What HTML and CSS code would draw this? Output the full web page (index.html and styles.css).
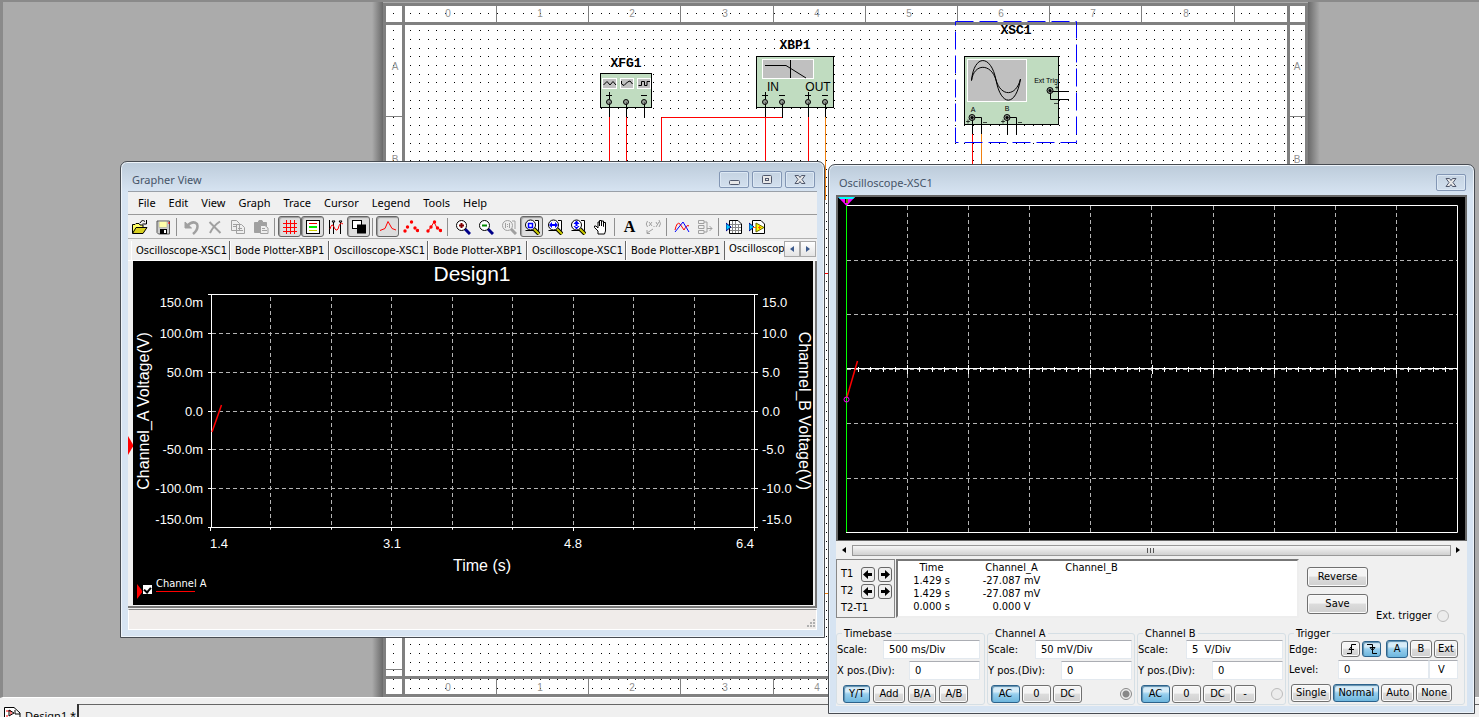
FILE: index.html
```html
<!DOCTYPE html>
<html lang="en">
<head>
<meta charset="utf-8">
<title>Design1</title>
<link rel="stylesheet" href="styles.css">
</head>
<body>
<main class="workspace">
  <svg class="sheet" width="948" height="695" viewBox="372 2 948 695">
    <defs>
      <linearGradient id="shL"><stop offset="0" stop-color="#ababab"/><stop offset="1" stop-color="#6a6a6a"/></linearGradient>
      <linearGradient id="shR"><stop offset="0" stop-color="#6a6a6a"/><stop offset="1" stop-color="#ababab"/></linearGradient>
    </defs>
    <rect x="372" y="2" width="11" height="696" fill="url(#shL)"/>
    <rect x="1308" y="2" width="12" height="696" fill="url(#shR)"/>
    <rect x="383" y="3" width="925" height="694" fill="#808080"/>
    <rect x="386" y="6" width="919" height="688" fill="#fff"/>
    <path id="dots" stroke="#000" shape-rendering="crispEdges"/>
    <g fill="#808080">
      <rect x="402" y="6" width="3" height="688"/><rect x="1287" y="6" width="3" height="688"/>
      <rect x="386" y="22" width="919" height="3"/><rect x="386" y="676" width="919" height="3"/>
    </g>
    <path id="rulers" stroke="#808080"/>
    <g id="rulerText" class="ruler-text"></g>
    <g fill="none" stroke="#f00">
      <path d="M609.500 117V170M626.500 117V170M661.500 170V117.500H782M765.500 117V170M808.500 117V170M972.500 134V170M820 273.500H830"/>
      <path stroke="#f08010" d="M825.500 117V200M981.500 134V170M820 593.500H830"/>
    </g>
    <g class="part-box">
      <rect x="600.500" y="73.500" width="51" height="34"/>
      <rect x="756.500" y="56.500" width="77" height="51"/>
      <rect x="964.500" y="56.500" width="94" height="68"/>
    </g>
    <g class="part-screen">
      <rect x="602.500" y="78.500" width="14" height="10"/><rect x="620.500" y="78.500" width="13" height="10"/><rect x="637.500" y="78.500" width="13" height="10"/>
      <rect x="762.500" y="59.500" width="51" height="19"/>
      <rect x="967.500" y="59.500" width="59" height="42"/>
    </g>
    <g fill="none" stroke="#000">
      <path d="M603.500 85L607 81.500L610 85L613 81.500L616 85M621.500 81V84L624 85.500L627.500 82L630 81L632.500 84M638.500 85.500H641.500V81.500H644.500V85.500H647V81.500H650"/>
      <path d="M765 65.500H786L790 68L806 78M790.500 60V78"/>
      <path d="M971.500 80.500C974 54 991 54 996 80C1001 107 1016 107 1020.500 79M971.500 80.500C974 63 991 63 996 80C1001 97 1016 97 1020.500 79"/>
      <path d="M606 95.500H612M609.500 92V99M641 95.500H647M762 95.500H768M765.500 92V99M779 95.500H785M805 95.500H811M808.500 92V99M822 95.500H828"/>
      <path d="M609.500 102V117M626.500 102V117M644.500 102V118M765.500 102V117M782.500 102V117M808.500 102V117M825.500 102V117"/>
      <path d="M972.500 117V134M972.500 117.500H981.500V134M1007.500 117V135M1007.500 117.500H1016.500V135M1069 91.500H1050.500V99.500H1069"/>
      <path stroke-width=".7" d="M966 121.500H970M968 119.500V123.500M983 122.500H987M1001 121.500H1005M1003 119.500V123.500M1018 122.500H1022M1055 87.500H1059M1057 85.500V89.500M1054 103.500H1058"/>
    </g>
    <g fill="#808080" fill-opacity=".7" stroke="#000">
      <circle cx="609" cy="102" r="2.500"/><circle cx="626" cy="102" r="2.500"/><circle cx="644" cy="102" r="2.500"/>
      <circle cx="765" cy="102" r="2.500"/><circle cx="782" cy="102" r="2.500"/><circle cx="808" cy="102" r="2.500"/><circle cx="825" cy="102" r="2.500"/>
      <circle cx="972" cy="117.500" r="3"/><circle cx="1007" cy="117.500" r="3"/><circle cx="1050" cy="90.500" r="3"/>
    </g>
    <g><circle cx="972" cy="117.500" r="1.500"/><circle cx="1007" cy="117.500" r="1.500"/><circle cx="1050" cy="90.500" r="1.500"/></g>
    <g class="part-name"><text x="626" y="67">XFG1</text><text x="795" y="49">XBP1</text><text x="1016" y="34">XSC1</text></g>
    <g class="part-port"><text x="773" y="91">IN</text><text x="818" y="91">OUT</text></g>
    <g class="part-pin"><text x="973" y="112">A</text><text x="1007" y="111">B</text><text x="1046" y="83">Ext Trig</text></g>
    <rect x="955.500" y="21.500" width="121" height="121" fill="none" stroke="#00f" stroke-dasharray="18 6"/>
  </svg>

  <section class="window grapher">
    <header class="title-bar">
      <h1>Grapher View</h1>
      <button class="win-btn" aria-label="Minimize"><svg width="12" height="12"><rect x="1.500" y="6.500" width="10" height="4" rx="1"/></svg></button>
      <button class="win-btn" aria-label="Maximize"><svg width="12" height="12"><rect x="1.500" y="1.500" width="9" height="8" rx="1"/><rect x="4.500" y="4.500" width="3" height="2"/></svg></button>
      <button class="win-btn" aria-label="Close"><svg width="12" height="12"><path d="M1 1.500H4.500L6 3.500L7.500 1.500H11L8 5.500L11 9.500H7.500L6 7.500L4.500 9.500H1L4 5.500Z"/></svg></button>
    </header>
    <div class="client">
      <nav class="menu"><button>File</button><button>Edit</button><button>View</button><button>Graph</button><button>Trace</button><button>Cursor</button><button>Legend</button><button>Tools</button><button>Help</button></nav>
      <div class="toolbar">
        <button aria-label="Open"><svg viewBox="0 0 16 16"><path d="M.500 14V5.500H3L4 4.500H7L8 6H11V8.500" fill="#ff6" stroke="#000"/><path d="M.500 14.500L4 8.500H15L11 14.500Z" fill="#d8d020" stroke="#000"/><path d="M8 4Q10 0 13 2.500M14.500 1V5H10.500" fill="none" stroke="#000"/></svg></button>
        <button aria-label="Save"><svg viewBox="0 0 16 16"><path d="M2 2H14.500V15H3.500L2 13.500Z" fill="#ccc" stroke="#555"/><rect x="4" y="2.500" width="8" height="6" fill="#ffa" stroke="#999" stroke-width=".5"/><rect x="5" y="10" width="7" height="5" fill="#000"/><rect x="9" y="11" width="2" height="3" fill="#fff"/><path d="M14 3V5" stroke="red"/></svg></button>
        <i class="sep"></i>
        <button aria-label="Undo"><svg viewBox="0 0 16 16" fill="none" stroke="#a0a0a0" stroke-width="2.500"><path d="M3 7Q9 1 13 5Q15 10 9 15"/><path d="M1 3V9H7.500Z" fill="#a0a0a0" stroke-width="1"/></svg></button>
        <button aria-label="Delete"><svg viewBox="0 0 16 16"><path d="M2.500 3L13.500 14M13 2.500Q7 6 3 14" stroke="#a0a0a0" stroke-width="2" fill="none"/></svg></button>
        <button aria-label="Copy"><svg viewBox="0 0 16 16" fill="#eee" stroke="#a0a0a0"><path d="M1.500 1.500H6.500L9.500 4.500V11.500H1.500ZM6.500 5.500H11.500L14.500 8.500V14.500H6.500Z"/><path d="M3 5.500H7M3 7.500H6M8 9.500H12M8 11.500H13"/></svg></button>
        <button aria-label="Paste"><svg viewBox="0 0 16 16" fill="#a0a0a0" stroke="#a0a0a0"><path d="M1.500 3.500H5L6 1.500H9L10 3.500H13.500V13.500H1.500Z"/><path d="M7.500 6.500H12L15 9V14.500H7.500Z" fill="#eee"/><path d="M9 9.500H12M9 11.500H14"/></svg></button>
        <i class="sep"></i>
        <button class="on" aria-label="Grid"><svg viewBox="0 0 16 16"><path d="M4.500 1V15M8.500 1V15M12.500 1V15M1 4.500H15M1 8.500H15M1 12.500H15" stroke="#f00"/></svg></button>
        <button class="on" aria-label="Legend"><svg viewBox="0 0 16 16"><rect x="1.500" y="1.500" width="13" height="13" fill="#fff" stroke="#000"/><path d="M4 4.500H12" stroke="#e00"/><path d="M4 8H12" stroke="#0e0" stroke-width="2"/><path d="M4 11.500H12" stroke="#cc0"/></svg></button>
        <button aria-label="Cursors"><svg viewBox="0 0 16 16" fill="none"><path d="M1.500 1V15M5.500 3V15M12.500 3V15M4 2H7L5.500 4ZM11 2H14L12.500 4Z" stroke="#000"/><path d="M2 10Q4 3 6 8T10 10Q12 2 15 5" stroke="#f00"/></svg></button>
        <button class="on" aria-label="Overlay"><svg viewBox="0 0 16 16"><rect x="6" y="5.500" width="9" height="9"/><rect x="1.500" y="1.500" width="9" height="8" fill="#fff" stroke="#000"/><rect x="6" y="5.500" width="4" height="3.500"/></svg></button>
        <i class="sep"></i>
        <button class="on" aria-label="Lines"><svg viewBox="0 0 16 16"><path d="M0 11.500L5 9.500L8 2.500L12 9.500L16 11" fill="none" stroke="#f00"/></svg></button>
        <button aria-label="Symbols"><svg viewBox="0 0 16 16" fill="#f00"><circle cx="2" cy="12" r="1.700"/><circle cx="4.500" cy="8" r="1.700"/><circle cx="8.500" cy="3" r="1.700"/><circle cx="12" cy="9" r="1.700"/><circle cx="14.500" cy="11.500" r="1.700"/></svg></button>
        <button aria-label="Lines and symbols"><svg viewBox="0 0 16 16" fill="#f00"><path d="M2 12L5 8L8 3L11 9L15 11" fill="none" stroke="#f00"/><circle cx="2" cy="12" r="1.700"/><circle cx="5" cy="8" r="1.700"/><circle cx="8.500" cy="3" r="1.700"/><circle cx="11.500" cy="9" r="1.700"/><circle cx="14.500" cy="11.500" r="1.700"/></svg></button>
        <i class="sep"></i>
        <button aria-label="Zoom in"><svg viewBox="0 0 16 16"><path d="M10 10L15 15" stroke="#008" stroke-width="3"/><circle cx="6.500" cy="6.500" r="5" fill="#fff" stroke="#000"/><path d="M4 6.500H9M6.500 4V9" stroke="#800000" stroke-width="2"/></svg></button>
        <button aria-label="Zoom out"><svg viewBox="0 0 16 16"><path d="M10 10L15 15" stroke="#008" stroke-width="3"/><circle cx="6.500" cy="6.500" r="5" fill="#fff" stroke="#000"/><path d="M4 6.500H9" stroke="#080" stroke-width="2"/></svg></button>
        <button aria-label="Zoom actual"><svg viewBox="0 0 16 16"><path d="M10 10L15 15" stroke="#a0a0a0" stroke-width="3"/><circle cx="6.500" cy="6.500" r="5" fill="#eee" stroke="#a0a0a0"/><path d="M11 2H14V10M4.500 4V9M8.500 4V9M6.500 5V6M6.500 7V8" stroke="#a0a0a0" fill="none"/></svg></button>
        <button class="on" aria-label="Zoom area"><svg viewBox="0 0 16 16"><path d="M11 1.500H14.500V11.500H1.500" fill="#fff" stroke="#000"/><path d="M10 10L15 15" stroke="#000" stroke-width="4"/><path d="M10 10L15 15" stroke="#cc0" stroke-width="2"/><circle cx="6.500" cy="6" r="5" fill="#fff" stroke="#000"/><rect x="4.500" y="4.500" width="4" height="4" fill="none" stroke="#00f" stroke-width="1.500"/></svg></button>
        <button aria-label="Zoom horizontal"><svg viewBox="0 0 16 16"><path d="M11 1.500H14.500V11.500H1.500" fill="#fff" stroke="#000"/><path d="M10 10L15 15" stroke="#000" stroke-width="4"/><path d="M10 10L15 15" stroke="#cc0" stroke-width="2"/><circle cx="6.500" cy="6" r="5" fill="#fff" stroke="#000"/><path d="M2 6L5 3V9ZM11 6L8 3V9ZM5 5H8V7H5Z" fill="#00f"/></svg></button>
        <button aria-label="Zoom vertical"><svg viewBox="0 0 16 16"><path d="M11 1.500H14.500V11.500H1.500" fill="#fff" stroke="#000"/><path d="M10 10L15 15" stroke="#000" stroke-width="4"/><path d="M10 10L15 15" stroke="#cc0" stroke-width="2"/><circle cx="6.500" cy="6" r="5" fill="#fff" stroke="#000"/><path d="M6.500 1.500L9.500 5H3.500ZM6.500 10.500L9.500 7H3.500ZM5.500 4H7.500V8H5.500Z" fill="#00f"/></svg></button>
        <button aria-label="Pan"><svg viewBox="0 0 16 16"><path d="M5 15V12L1.500 8.500V7H3L5 9V3H6.500V7V1.500H8.500V7V2H10.500V7.500V3.500H12.500V12L11.500 15Z" fill="#fff" stroke="#000"/></svg></button>
        <i class="sep"></i>
        <button class="text-tool">A</button>
        <button aria-label="Label point"><svg viewBox="0 0 16 16" fill="none" stroke="#a0a0a0"><path d="M2.500 2Q0 5 2.500 8M4 3L7 7M7 3L4 7M9 7V8M11 3L12 5M14 3L11 8M14 1Q17 5 14 8M8 10L2 14M2 11V14.500H5"/></svg></button>
        <i class="sep"></i>
        <button aria-label="Overlay traces"><svg viewBox="0 0 16 16" fill="none"><path d="M1 11Q3 2 6 5L10 11Q13 5 15 7" stroke="#f00"/><path d="M1 13L9 3L15 13" stroke="#00f"/></svg></button>
        <button aria-label="Merge"><svg viewBox="0 0 16 16" fill="none" stroke="#a0a0a0"><path d="M1.500 1.500H7V4.500H1.500ZM1.500 6.500H7V9.500H1.500ZM1.500 11.500H7V14.500H1.500ZM7 3H10V13H7M10 9.500H15M12.500 7L15 9.500L12.500 12"/></svg></button>
        <i class="sep"></i>
        <button aria-label="Export to Excel"><svg viewBox="0 0 16 16"><path d="M3.500 1.500H12L15.500 5V14.500H3.500Z" fill="#fff" stroke="#000"/><path d="M6.500 2V14M9.500 2V14M12.500 5V14M4 5.500H15M4 8.500H15M4 11.500H15" stroke="#888"/><path d="M0 4L5 8L0 12Z" fill="#0cf" stroke="#008"/></svg></button>
        <button aria-label="Export to LabVIEW"><svg viewBox="0 0 16 16"><path d="M3.500 1.500H12L15.500 5V14.500H3.500Z" fill="#fff" stroke="#000"/><path d="M0 4L5 8L0 12Z" fill="#0cf" stroke="#008"/><path d="M7 4L15 8.500L7 13Z" fill="#ff0" stroke="#660"/><path d="M4 8.500H7M9 8.500H12M10.500 7V10" stroke="#f60"/></svg></button>
      </div>
      <div class="tabs">
        <div class="tab-strip"><button>Oscilloscope-XSC1</button><button>Bode Plotter-XBP1</button><button>Oscilloscope-XSC1</button><button>Bode Plotter-XBP1</button><button>Oscilloscope-XSC1</button><button>Bode Plotter-XBP1</button><button class="active">Oscilloscope-XSC1</button></div>
        <button class="tab-arrow" aria-label="Previous tabs"><svg width="4" height="6"><path d="M4 0V6L0 3Z" fill="#3c5a8c"/></svg></button>
        <button class="tab-arrow" aria-label="Next tabs"><svg width="4" height="6"><path d="M0 0V6L4 3Z" fill="#3c5a8c"/></svg></button>
      </div>
      <div class="chart-frame">
        <svg class="chart" viewBox="128 261 685 344">
          <rect x="133" y="261" width="680" height="344"/>
          <path d="M128 436V455L133 446.500V444.500Z" fill="#f00"/>
          <path class="grid" d="M270.500 297V530M331.500 297V530M391.500 297V530M452.500 297V530M512.500 297V530M573.500 297V530M633.500 297V530M694.500 297V530M212 333.500H754M212 372.500H754M212 411.500H754M212 449.500H754M212 488.500H754"/>
          <path class="axis" d="M208 294.500H758M208 527.500H758M211.500 294V527M754.500 294V531M210.500 527V531M391.500 527V531M573.500 527V531M270.500 527V529M331.500 527V529M452.500 527V529M512.500 527V529M633.500 527V529M694.500 527V529M208 333.500H212M208 372.500H212M208 411.500H212M208 449.500H212M208 488.500H212M754 333.500H758M754 372.500H758M754 411.500H758M754 449.500H758M754 488.500H758"/>
          <path d="M212 432L221.500 405" stroke="#f00" stroke-width="1.500"/>
          <g class="tick end"><text x="203" y="307">150.0m</text><text x="203" y="338">100.0m</text><text x="203" y="377">50.0m</text><text x="203" y="416">0.0</text><text x="203" y="454">-50.0m</text><text x="203" y="493">-100.0m</text><text x="203" y="524">-150.0m</text></g>
          <g class="tick"><text x="762" y="307">15.0</text><text x="762" y="338">10.0</text><text x="762" y="377">5.0</text><text x="762" y="416">0.0</text><text x="762" y="454">-5.0</text><text x="762" y="493">-10.0</text><text x="762" y="524">-15.0</text><text x="210" y="548">1.4</text><text x="383" y="548">3.1</text><text x="564" y="548">4.8</text><text x="736" y="548">6.4</text></g>
          <text class="chart-title" x="472" y="281">Design1</text>
          <text class="axis-title" x="482" y="571">Time (s)</text>
          <text class="axis-title" transform="translate(149 411) rotate(-90)">Channel_A Voltage(V)</text>
          <text class="axis-title" transform="translate(799 411) rotate(90)">Channel_B Voltage(V)</text>
          <path d="M137 584V599L142 592.500V590.500Z" fill="#f00"/>
        </svg>
        <label class="legend"><input type="checkbox" checked><span>Channel A</span></label>
      </div>
      <footer class="status"><svg width="9" height="9" class="grip"><path d="M7 1h2M4 4h2M7 4h2M1 7h2M4 7h2M7 7h2" stroke="#b0b0b0" stroke-width="2"/></svg></footer>
    </div>
  </section>

  <section class="window scope">
    <header class="title-bar">
      <h1>Oscilloscope-XSC1</h1>
      <button class="win-btn" aria-label="Close"><svg width="12" height="12"><path d="M1 1.500H4.500L6 3.500L7.500 1.500H11L8 5.500L11 9.500H7.500L6 7.500L4.500 9.500H1L4 5.500Z"/></svg></button>
    </header>
    <div class="client">
      <div class="scope-frame">
        <svg class="scope-screen" viewBox="838 197 627 343">
          <rect x="838" y="197" width="627" height="343"/>
          <path class="grid" d="M907.500 206V532M968.500 206V532M1029.500 206V532M1090.500 206V532M1151.500 206V532M1213.500 206V532M1274.500 206V532M1335.500 206V532M1396.500 206V532M847 260.500H1457M847 314.500H1457M847 369.500H1457M847 423.500H1457M847 478.500H1457"/>
          <path class="axis" d="M846 205.500H1457.500V532.500H846M847 368.500H1457"/>
          <path id="scopeTicks" class="axis"/>
          <path d="M846.500 205V532" stroke="#0f0"/>
          <path d="M847 397L857.500 361" stroke="#f00" stroke-width="1.500"/>
          <circle cx="846.500" cy="399.500" r="2.500" fill="none" stroke="#f0f"/>
          <path d="M838 197H855L846.500 206Z" fill="#f0f"/><path d="M838 197H855L853 199H840Z" fill="#0ff"/>
          <path d="M845 199H848V203H845" fill="#000"/><path d="M846 200H848M846 202H848" stroke="#ff0"/>
        </svg>
      </div>
      <div class="scrollbar"><button aria-label="Scroll left"><svg width="4" height="6"><path d="M4 0V6L0 3Z"/></svg></button><div class="thumb"></div><button aria-label="Scroll right"><svg width="4" height="6"><path d="M0 0V6L4 3Z"/></svg></button></div>
      <div class="readings">
        <div class="cursors">
          <span>T1</span><button aria-label="T1 left"><svg width="10" height="9"><path d="M0 4.500L5 0V3H9V6H5V9Z"/></svg></button><button aria-label="T1 right"><svg width="10" height="9"><path d="M10 4.500L5 0V3H1V6H5V9Z"/></svg></button>
          <span>T2</span><button aria-label="T2 left"><svg width="10" height="9"><path d="M0 4.500L5 0V3H9V6H5V9Z"/></svg></button><button aria-label="T2 right"><svg width="10" height="9"><path d="M10 4.500L5 0V3H1V6H5V9Z"/></svg></button>
          <span class="wide">T2-T1</span>
        </div>
        <div class="readout">
          <table>
            <tr><th>Time</th><th>Channel_A</th><th>Channel_B</th></tr>
            <tr><td>1.429 s</td><td>-27.087 mV</td><td></td></tr>
            <tr><td>1.429 s</td><td>-27.087 mV</td><td></td></tr>
            <tr><td>0.000 s</td><td>0.000 V</td><td></td></tr>
          </table>
        </div>
        <div class="actions"><button class="btn">Reverse</button><button class="btn">Save</button></div>
        <label class="ext">Ext. trigger <input type="radio" disabled></label>
      </div>
      <div class="groups">
        <fieldset class="group timebase"><legend>Timebase</legend>
          <div class="field"><label for="ts">Scale:</label><input id="ts" class="long" value="500 ms/Div"></div>
          <div class="field"><label for="tx">X pos.(Div):</label><input id="tx" value="0"></div>
          <div class="row"><button class="btn sel">Y/T</button><button class="btn">Add</button><button class="btn">B/A</button><button class="btn">A/B</button></div>
        </fieldset>
        <fieldset class="group channel"><legend>Channel A</legend>
          <div class="field"><label for="as">Scale:</label><input id="as" class="long" value="50 mV/Div"></div>
          <div class="field"><label for="ay">Y pos.(Div):</label><input id="ay" value="0"></div>
          <div class="row"><button class="btn sel">AC</button><button class="btn">0</button><button class="btn">DC</button><input type="radio" checked aria-label="Channel A terminal"></div>
        </fieldset>
        <fieldset class="group channel"><legend>Channel B</legend>
          <div class="field"><label for="bs">Scale:</label><input id="bs" class="long" value="5  V/Div"></div>
          <div class="field"><label for="by">Y pos.(Div):</label><input id="by" value="0"></div>
          <div class="row"><button class="btn sel">AC</button><button class="btn">0</button><button class="btn">DC</button><button class="btn minus">-</button><input type="radio" aria-label="Channel B terminal"></div>
        </fieldset>
        <fieldset class="group trigger"><legend>Trigger</legend>
          <div class="field edge"><span>Edge:</span>
            <button class="btn icon" aria-label="Rising edge"><svg width="12" height="12" fill="none" stroke="#000"><path d="M2 10.500H6.500V1.500H11M4 6.500H9M6.500 3.500L4 6.500"/></svg></button>
            <button class="btn icon sel" aria-label="Falling edge"><svg width="12" height="12" fill="none" stroke="#000"><path d="M1 1.500H6.500V10.500H11M4 4.500L6.500 7.500L9 4.500H4"/></svg></button>
            <button class="btn src first sel">A</button><button class="btn src">B</button><button class="btn src">Ext</button>
          </div>
          <div class="field"><label for="lv">Level:</label><input id="lv" class="level" value="0"><input class="unit" aria-label="Level unit" value="V"></div>
          <div class="row"><button class="btn">Single</button><button class="btn sel">Normal</button><button class="btn">Auto</button><button class="btn">None</button></div>
        </fieldset>
      </div>
    </div>
  </section>
</main>
<footer class="doc-tabs">
  <button class="doc-tab"><svg width="17" height="16"><path d="M.500 16V.500H10L16 6V16" fill="#fff" stroke="#000"/><path d="M2 4H7V8M3 8V14" fill="none" stroke="#f00"/><path d="M5 3L10 6L5 9ZM11 3V7H16" fill="none" stroke="#000"/></svg>Design1 *</button>
  <div class="doc-rest"></div>
</footer>
<script src="draw.js"></script>
</body>
</html>
```
FILE: styles.css
```css
* { box-sizing: border-box; }
body { margin: 0; height: 100vh; overflow: hidden; display: flex; flex-direction: column; background: #f0f0f0; font: 11px/13px "DejaVu Sans Condensed", "Noto Sans", sans-serif; color: #000; }
button, input { font: inherit; color: inherit; margin: 0; padding: 0; border: 0; background: none; }
svg { display: block; flex: none; }
.workspace { flex: 1; min-height: 0; position: relative; z-index: 1; background: #ababab; border-top: 2px solid #8a8a8a; border-left: 3px solid #8a8a8a; border-bottom: 1px solid #fff; }
.sheet { position: absolute; left: 369px; top: 0; }
.ruler-text { font: 10px "Liberation Sans", sans-serif; fill: #909090; text-anchor: middle; }
.part-box { fill: #c0dcc0; stroke: #000; }
.part-screen { fill: #c0c0c0; stroke: #fff; }
.part-name { font: bold 13px "Liberation Mono", monospace; text-anchor: middle; }
.part-port { font: 12px "Liberation Sans", sans-serif; text-anchor: middle; }
.part-pin { font: 7px "Liberation Sans", sans-serif; text-anchor: middle; }

.window { position: absolute; display: flex; flex-direction: column; padding: 0 7px 7px; border: 1px solid #484c52; border-radius: 7px 7px 0 0; background: linear-gradient(#bccbda, #d7e4f2 30px); box-shadow: inset 0 0 0 1px #eef4fa; }
.grapher { left: 117px; top: 159px; width: 705px; }
.scope { left: 825px; top: 162px; width: 647px; }
.title-bar { display: flex; gap: 3px; height: 30px; padding: 9px 2px 0 4px; }
.title-bar h1 { flex: 1; margin: 0; font: 11px/18px "Noto Sans", sans-serif; color: #465468; }
.scope .title-bar { padding-left: 3px; padding-right: 1px; }
.win-btn { width: 30px; height: 17px; display: grid; place-items: center; border: 1px solid #8296b4; border-radius: 2px; box-shadow: inset 0 0 0 1px #dce8f4; }
.win-btn svg { fill: #e8e8e8; stroke: #50586c; }
.client { background: #f0f0f0; display: flex; flex-direction: column; }
.grapher .client { box-shadow: 0 -1px #9aa0a8; }

.menu { display: flex; gap: 13px; padding: 0 10px; height: 22px; }
.menu button { font: 11px/22px "Noto Sans", sans-serif; }
.toolbar { display: flex; height: 25px; border-top: 1px solid #9a9a9a; border-bottom: 1px solid #b0b0b0; align-items: center; }
.toolbar button { width: 23px; height: 21px; display: grid; place-items: center; border: 1px solid transparent; border-radius: 3px; }
.toolbar button svg { width: 16px; height: 16px; }
.toolbar .on { border-color: #666; background: #dedede; box-shadow: inset 1px 1px 1px #999; }
.toolbar .text-tool { font: bold 16px/20px "Liberation Serif", serif; }
.sep { width: 6px; height: 18px; border-left: 1px solid #909090; margin-left: 2px; margin-right: -2px; }
.tabs { display: flex; height: 22px; padding: 2px 1px 0 3px; border-bottom: 1px solid #fff; }
.tab-strip { flex: 1; min-width: 0; overflow: hidden; display: flex; }
.tab-strip button { flex: 0 0 99px; white-space: nowrap; text-align: left; padding-left: 4px; border-left: 1px solid #fff; border-right: 1px solid #666; }
.tab-strip .active { border: 0; background: #f6f6f6; padding-bottom: 4px; }
.tab-arrow { width: 16px; height: 16px; border: 1px solid #a8a8a8; display: grid; place-items: center; background: linear-gradient(#fff, #e4e4e4); }
.chart-frame { position: relative; padding: 0 2px 1px 0; border-right: 2px solid #777; border-bottom: 2px solid #777; }
.chart, .scope-screen { width: 100%; height: auto; }
.grid { stroke: #b4b4b4; stroke-dasharray: 4 3; fill: none; }
.axis { stroke: #fff; fill: none; }
.tick { font: 13px "Liberation Sans", sans-serif; fill: #fff; }
.end { text-anchor: end; }
.chart-title { font: 21px "Liberation Sans", sans-serif; fill: #fff; text-anchor: middle; }
.axis-title { font: 16px "Liberation Sans", sans-serif; fill: #fff; text-anchor: middle; }
.legend { position: absolute; left: 15px; bottom: 12px; display: flex; gap: 4px; align-items: flex-end; color: #fff; }
.legend input { appearance: none; width: 9px; height: 9px; display: grid; place-items: center; background: #fff; color: #000; }
.legend input:checked::after { content: ""; width: 3px; height: 5px; border: solid #000; border-width: 0 2px 2px 0; rotate: 40deg; }
.legend span { background: linear-gradient(#f00, #f00) 0 100% / 39px 1px no-repeat; padding-bottom: 2px; margin-bottom: 2px; }
.status { height: 21px; margin-top: 1px; display: flex; justify-content: flex-end; align-items: flex-end; background: #f0ecea; border: 1px solid #fff; border-top-color: #888; padding: 1px; }

.scope-frame { border: 2px solid #686868; border-bottom: 1px solid #686868; }
.scrollbar { height: 18px; display: flex; align-items: center; padding: 0 6px; gap: 5px; }
.scrollbar button { width: 5px; }
.thumb { flex: 1; height: 11px; border: 1px solid #989898; background: repeating-linear-gradient(90deg, #555 0 1px, transparent 1px 3px) center / 9px 5px no-repeat, linear-gradient(#f6f6f6, #d0d0d0); }
.readings { display: flex; align-items: flex-start; height: 68px; }
.cursors { width: 59px; height: 59px; border: 1px solid #888; padding: 7px 0 0 4px; display: grid; grid-template-columns: 17px 14px 14px; grid-auto-rows: 15px; column-gap: 3px; row-gap: 2px; margin-right: 1px; }
.cursors .wide { grid-column: 1 / 4; }
.cursors button { width: 14px; height: 15px; border: 1px solid #666; border-radius: 3px; display: grid; place-items: center; background: #eee; }
.readout { width: 403px; height: 59px; background: #fff; border: 2px solid #777; border-right-color: #eee; border-bottom-color: #eee; }
table { border-collapse: collapse; }
td, th { padding: 0; font-weight: normal; text-align: center; height: 13px; }
td:nth-child(1), th:nth-child(1) { width: 67px; text-align: center; }
td:nth-child(2), th:nth-child(2) { width: 93px; }
td:nth-child(3), th:nth-child(3) { width: 67px; }
.btn { height: 18px; display: grid; place-items: center; border: 1px solid #707070; border-radius: 3px; background: linear-gradient(#f4f4f4 45%, #dcdcdc 50%, #d0d0d0); box-shadow: inset 0 0 0 1px #fafafa; min-width: 27px; line-height: 14px; }
.sel { border-color: #2c628b; background: linear-gradient(#d6ecf8 35%, #98cfee 50%, #6db6dd); box-shadow: inset 1px 1px 1px #5b8cab; }
.actions { display: grid; gap: 7px; margin: 8px 8px 0; }
.actions .btn { width: 61px; height: 20px; }
.ext { display: flex; align-items: center; gap: 5px; margin-top: 50px; }
input[type="radio"] { appearance: none; width: 12px; height: 12px; border: 1px solid #bcbcbc; border-radius: 50%; background: #ececec; }
input[type="radio"]:checked { background: radial-gradient(#888 3px, #eee 4px); border-color: #888; }
.groups { display: grid; grid-template-columns: 149px 148px 149px 1fr; gap: 2px; padding: 0 2px 1px 0; }
.group { margin: 0; min-width: 0; padding: 0 4px 2px 0; border: 1px solid #d5dfe5; border-radius: 3px; height: 78px; display: flex; flex-direction: column; gap: 2px; }
.group legend { padding: 0 2px; margin-left: 5px; height: 13px; }
.field { display: flex; align-items: center; justify-content: space-between; height: 19px; }
.field input { width: 71px; height: 19px; padding: 0 5px; background: #fff; border: 1px solid #e3e9ef; border-top-color: #abadb3; }
.field .long { width: 97px; }
.channel { padding-right: 2px; }
.row { display: flex; gap: 2px; padding: 3px 0 0 3px; align-items: center; }
.row .btn { padding: 0 5px; }
.row input { margin-left: auto; }
.timebase .row { gap: 3px; padding-left: 6px; }
.channel .btn { width: 29px; }
.channel .minus { width: 22px; min-width: 22px; }
.trigger { padding-right: 6px; }
.edge { gap: 2px; }
.edge span { flex: 1; }
.edge .icon { min-width: 19px; height: 16px; }
.edge .src { min-width: 22px; padding: 0 3px; }
.edge .first { margin-left: 3px; }
.field .level { width: 91px; margin-left: auto; }
.field .unit { width: 29px; padding-left: 8px; }
.trigger .row { padding-left: 2px; margin-right: -6px; }
.trigger .row .btn { padding: 0 4px; }

.doc-tabs { height: 19px; flex: none; display: flex; padding-top: 6px; overflow: hidden; }
.doc-tab { width: 79px; display: flex; gap: 4px; align-items: flex-start; padding: 3px 0 0 4px; border-right: 2px solid #333; font: 11px/17px "Noto Sans", sans-serif; white-space: nowrap; }
.doc-rest { flex: 1; border-top: 1px solid #666; }
```
FILE: draw.js
```js
const setPath = (id, d) => document.getElementById(id).setAttribute('d', d);

let dots = '';
for (let r = 0; r < 79; r++) {
  for (let c = 0; c < 106; c++) {
    dots += `M${Math.round(393 + c * 8.65)} ${Math.round(13 + r * 8.65) + 0.5}h1`;
  }
}
setPath('dots', dots);

let rulers = 'M386 116.500H402M1290 116.500H1305M386 669.500H402M1290 669.500H1305';
for (let i = 0; i < 9; i++) {
  const x = Math.round(496 + i * 92.2) + 0.5;
  rulers += `M${x} 6V22M${x} 679V694`;
}
setPath('rulers', rulers);

let labels = '';
for (let i = 0; i < 9; i++) {
  const x = Math.round(448 + i * 92.2);
  labels += `<text x="${x}" y="17">${i}</text><text x="${x}" y="691">${i}</text>`;
}
for (const x of [395, 1297]) {
  labels += `<text x="${x}" y="70">A</text><text x="${x}" y="163">B</text>`;
}
document.getElementById('rulerText').innerHTML = labels;

let ticks = '';
for (let i = 1; i < 50; i++) {
  const x = Math.round(846 + i * 12.22) + 0.5;
  ticks += i % 5 ? `M${x} 367V372` : `M${x} 365V374`;
}
setPath('scopeTicks', ticks);
```
